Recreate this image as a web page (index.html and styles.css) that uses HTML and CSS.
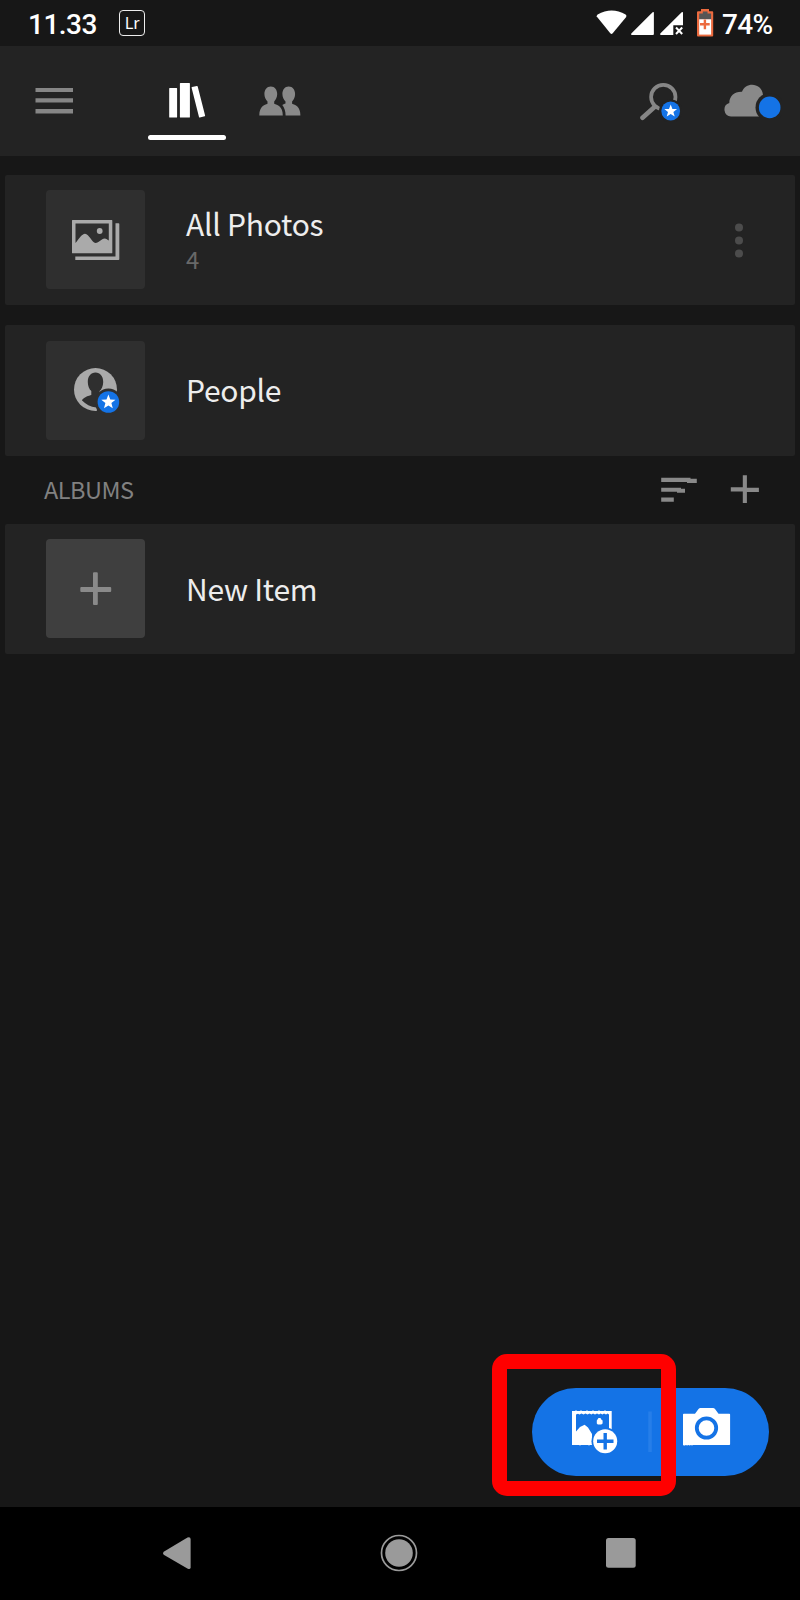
FILE: index.html
```html
<!DOCTYPE html>
<html lang="en">
<head>
<meta charset="utf-8">
<title>Library</title>
<link rel="stylesheet" href="styles.css">
</head>
<body>
<div class="screen">
  <div class="status">
    <span class="time">11.33</span>
    <span class="lr">Lr</span>
    <svg class="status-icons" width="122" height="46" viewBox="594 0 122 46">
      <path fill="#fff" d="M596.7 16.5Q596.6 15.4 597.6 14.6Q611.7 6.4 625.6 14.6Q626.8 15.6 626.2 16.9L612.7 33.3Q611.5 34.6 610.3 33.3Z"/>
      <path fill="#fff" d="M653.9 12.8V34Q653.9 35.1 652.9 35.1H631.9Q630.4 34.8 631.3 33.6L652.6 12.3Q653.8 11.5 653.9 12.8Z"/>
      <path fill="#fff" d="M683 12.8V25.3H673.3V35.1H661Q659.4 34.8 660.3 33.6L681.7 12.3Q682.9 11.5 683 12.8Z"/>
      <path stroke="#fff" stroke-width="2" d="M676 27.5L682.2 34M682.2 27.5L676 34"/>
      <path fill="#ec6b3f" d="M701 9h8v2.2h3.2q1 0 1 1V35.500q0 1-1 1H698q-1 0-1-1V12.200q0-1 1-1h3z"/>
      <path fill="#555" d="M699.200 13.500h3.600v-2h4.700v2h3.600v6h-11.900z"/>
      <path fill="#fff" d="M699.200 19.300h11.900v15.300h-11.900z"/>
      <path stroke="#ec6b3f" stroke-width="2.400" d="M700 24.300h9.700M704.900 19.500v9.700"/>
    </svg>
    <span class="percent">74%</span>
  </div>

  <div class="toolbar">
    <svg class="menu" width="38" height="26" viewBox="35 88 38 26"><path fill="#868686" d="M35.500 88H73v4H35.500zM35.500 98.300H73v4.200H35.500zM35.500 109H73v4.500H35.500z"/></svg>
    <div class="tab">
      <svg width="38" height="35" viewBox="168 83 38 35">
        <path fill="#fff" d="M169.700 88h6.900q.5 0 .5.500v28.500q0 .5-.5.500h-6.900q-.5 0-.5-.5V88.500q0-.5.5-.5zM180.500 83h8.800q.6 0 .6.600v33.300q0 .6-.6.600h-8.800q-.6 0-.6-.6V83.600q0-.6.600-.6zM192 87.100l4.900-1.200q.6-.1.800.500l7.400 29.200q.1.500-.4.700l-4.900 1.200q-.6.100-.8-.5l-7.400-29.200q-.1-.5.400-.7z"/>
      </svg>
      <span class="underline"></span>
    </div>
    <svg class="friends" width="42" height="30" viewBox="259.500 85.500 42 30">
      <g fill="#898989">
        <path d="M271.300 85.900c4 0 6.400 3.300 6.400 7.700 0 3.100-1.400 5.700-3 7.400v2.300c3 1.200 8.600 2.300 8.600 11.700h-23.500c0-9.200 5.300-10.500 8.200-11.700V101c-1.700-1.700-3.100-4.300-3.100-7.400 0-4.400 2.400-7.700 6.400-7.700z"/>
        <path d="M289.200 85.900c4 0 6.400 3.300 6.400 7.700 0 3.100-1.300 5.700-3 7.400v2.300c3 1.200 8.300 2.500 8.300 11.700h-14.800c0-5-1.400-8-3.300-10.600 1.200-.8 2.400-1 3.200-1.400V101c-1.700-1.700-3.100-4.300-3.100-7.400 0-4.400 2.300-7.700 6.300-7.700z"/>
      </g>
    </svg>
    <svg class="search" width="42" height="40" viewBox="640 82 42 40">
      <circle cx="663.300" cy="97" r="12.200" fill="none" stroke="#868686" stroke-width="3.700"/>
      <path d="M654.500 107L642.500 117.800" stroke="#868686" stroke-width="4.600" stroke-linecap="round"/>
      <circle cx="670.700" cy="111" r="11.600" fill="#232323"/>
      <circle cx="670.700" cy="111" r="9.400" fill="#1473e6"/>
      <path fill="#fff" d="M670.700 104.500l1.700 4.400 4.700.2-3.700 2.900 1.300 4.600-4-2.600-4 2.600 1.300-4.600-3.700-2.900 4.700-.2z"/>
    </svg>
    <svg class="cloud" width="58" height="36" viewBox="724 83 58 36">
      <path fill="#898989" d="M731 116.400a6.800 6.800 0 0 1-1.700-13.300C729.300 96 734.500 91.500 742 91.800C745.500 81.500 762 82.500 763 95C768 97 770 102 768 109L762 116.400z"/>
      <circle cx="769.700" cy="107.400" r="14.200" fill="#232323"/>
      <circle cx="769.700" cy="107.400" r="10.800" fill="#1473e6"/>
    </svg>
  </div>

  <main class="library">
    <div class="card">
      <div class="thumb">
        <svg width="49" height="42" viewBox="71 219 49 42">
          <path fill="#aaa" fill-rule="evenodd" d="M72.500 220h39.300q.5 0 .5.500v32.200q0 .5-.5.500H72.500q-.5 0-.5-.5v-32.200q0-.5.5-.5zM75.500 223.500V243C79 239 82 233.800 85 233.800C89 233.800 92 243 95.500 243C99 243 101.500 238.600 104.500 238.600C106.500 238.600 107.500 240 108.800 240.500V223.500z"/>
          <circle cx="99.700" cy="231" r="2.900" fill="#aaa"/>
          <path fill="#aaa" d="M115.500 223.200h3q.8 0 .8.800v35.200q0 .8-.8.800H75.300v-3.600h40.200z"/>
        </svg>
      </div>
      <div class="labels labels-all"><span class="title">All Photos</span><span class="count">4</span></div>
      <svg class="more" width="10" height="36" viewBox="734 222.500 10 36"><g fill="#4c4c4c"><circle cx="739" cy="228" r="4"/><circle cx="739" cy="241" r="4"/><circle cx="739" cy="254" r="4"/></g></svg>
    </div>

    <div class="card people-card">
      <div class="thumb">
        <svg width="49" height="50" viewBox="71 366 49 50">
          <circle cx="95.500" cy="390.500" r="21.500" fill="#aaa"/>
          <path fill="#2f2f2f" d="M95.500 373.600c4.700 0 7.700 3.900 7.700 9.300 0 4-1.500 7-3.600 9.200v4.500l12.400 4-14 12.200h-1c0-2-.3-3.500-.6-4.300-6-.7-10.500-3-14.600-7.300 3-3.800 7-4.500 9.500-5.300v-3.800c-2.100-2.200-3.500-5.200-3.500-9.200 0-5.400 3-9.300 7.700-9.300z"/>
          <circle cx="108.400" cy="403" r="13.500" fill="#2f2f2f"/>
          <circle cx="108.400" cy="403" r="10.800" fill="#1473e6"/>
          <path fill="#fff" d="M108.400 395.500l1.900 5 5.200.3-4.100 3.300 1.400 5.200-4.400-2.900-4.400 2.900 1.400-5.200-4.100-3.300 5.200-.3z"/>
        </svg>
      </div>
      <div class="labels"><span class="title">People</span></div>
    </div>

    <div class="section">
      <span class="section-title">ALBUMS</span>
      <svg class="sort" width="36" height="26" viewBox="661 476.500 36 26"><path fill="#898989" d="M661.200 477.300H690.500V478.200H696.800V482.500H687V481.500H661.200zM661.200 487.300H681V488.200H685V492.300H677V491.300H661.200zM661.200 497H673.800V501.200H661.200z"/></svg>
      <svg class="add" width="30" height="30" viewBox="730 475 30 30"><path fill="#898989" d="M742.800 475.200h4.100v12.600h12v4.200h-12v11h-4.100v-11.500h-12v-4.200h12z"/></svg>
    </div>

    <div class="card">
      <div class="thumb thumb-new">
        <svg width="33" height="35" viewBox="79.500 571 33 35"><path fill="#8a8a8a" d="M94.500 572.300h2.800q1 0 1 1v13.800h12.400q1 0 1 1v2.800q0 1-1 1h-12.400v12.200q0 1-1 1h-2.800q-1 0-1-1v-12.200h-11.700q-1 0-1-1v-2.800q0-1 1-1h11.700v-13.800q0-1 1-1z"/></svg>
      </div>
      <div class="labels"><span class="title">New Item</span></div>
    </div>
  </main>

  <div class="fab">
    <svg width="237" height="88" viewBox="532 1388 237 88">
      <path fill="#fff" fill-rule="evenodd" d="M572 1411h3l1-.8 1 .8h3l1-.8 1 .8h4l1-.8 1 .8h4l1-.8 1 .8h4l1-.8 1 .8h4l1-.8 1 .8h5.700v20H609v-16.500l-1.500-1-1.500 1-2-1-1.500 1-2-1-1.500 1-2-1-2 1-2-1-1.500 1-2-1-2 1-2-1-2 1-2-1-2 1-1.500-.8-2 .8V1431.500L580 1427 584.600 1424.800 588 1427.500 592 1434 592.300 1445H590l-1 .5-1-.5h-7l-1 .5-1-.5h-7z"/>
      <path fill="#fff" d="M597.500 1419.500l1-1.500h2l.8 1.500 1.300 1v3l-1.300 1h-3.500l-1-1v-3z"/>
      <circle cx="605.200" cy="1441.200" r="13.700" fill="#1473e6"/>
      <circle cx="605.200" cy="1441.200" r="12" fill="#fff"/>
      <path stroke="#1473e6" stroke-width="3.400" d="M597 1441.200h16.500M605.200 1433v16.500"/>
      <path fill="#267ee9" d="M648.300 1411.500h3.500v40.500h-3.500z"/>
      <path fill="#fff" d="M683 1414.500q0-.8.800-.8h11.200l3.500-4.600q.8-1 2-1h12.500q1.200 0 2 1l3.500 4.600h10.800q.8 0 .8.800v29.700q0 .8-.8.800H693l-1 .6-1-.6-1.500.6-1-.6-1.500.6-1-.6-1.200.6H683.800l-.8-.6z"/>
      <circle cx="706.500" cy="1428" r="9.700" fill="#fff" stroke="#1473e6" stroke-width="3.800"/>
    </svg>
  </div>
  <div class="highlight"></div>

  <nav class="navbar">
    <svg width="30" height="34" viewBox="162 1536 30 34"><path fill="#9a9a9a" d="M163.700 1551.800L187.500 1537.600Q190.500 1536.700 190.600 1539V1567.500Q190.300 1569.700 187.800 1568.700L163.700 1554.800Q162.200 1553.300 163.700 1551.800z"/></svg>
    <svg width="38" height="38" viewBox="380.500 1534 38 38"><circle cx="399.500" cy="1553" r="17.500" fill="none" stroke="#9a9a9a" stroke-width="1.700"/><circle cx="399.500" cy="1553" r="13.800" fill="#9a9a9a"/></svg>
    <svg width="30" height="30" viewBox="606 1538.300 30 30"><rect x="606" y="1538.400" width="29.700" height="29.700" rx="2.500" fill="#9a9a9a"/></svg>
  </nav>
</div>
</body>
</html>
```
FILE: styles.css
```css
* { box-sizing: border-box; }
body { margin: 0; background: #171717; }
svg { display: block; flex: none; }
.screen {
  position: relative;
  display: flex;
  flex-direction: column;
  width: 800px;
  height: 1600px;
  overflow: hidden;
  background: #171717;
  font-family: "Noto Sans CJK SC", "Noto Sans", sans-serif;
}
.status {
  display: flex;
  align-items: center;
  height: 46px;
  padding-left: 28px;
  color: #fff;
  font: 500 28px/46px Roboto, sans-serif;
}
.time { width: 91px; padding-top: 4px; letter-spacing: -0.500px; }
.lr {
  width: 26px;
  height: 26px;
  border: 1.500px solid #eee;
  border-radius: 4px;
  font: 400 16px/22px "Noto Sans CJK SC", sans-serif;
  letter-spacing: -0.300px;
  text-align: center;
}
.status-icons { margin-left: 449px; }
.percent { margin-left: 6px; padding-top: 4px; letter-spacing: -0.700px; }

.toolbar {
  display: flex;
  align-items: flex-start;
  height: 110px;
  padding-left: 35px;
  background: #232323;
}
.menu { margin-top: 42px; }
.tab {
  display: flex;
  flex-direction: column;
  justify-content: space-between;
  width: 78px;
  height: 94px;
  margin-left: 75px;
  padding-top: 37px;
}
.tab svg { margin-left: 20px; }
.underline { height: 5px; border-radius: 2.500px; background: #fff; }
.friends { margin: 39.500px 0 0 33px; }
.search { margin: 36px 0 0 339px; }
.cloud { margin: 37px 0 0 42px; }

.library { display: flex; flex-direction: column; padding: 19px 5px 0; }
.card {
  display: flex;
  align-items: center;
  height: 130px;
  padding: 0 0 1px 41px;
  border-radius: 2px;
  background: #232323;
}
.people-card { height: 131px; margin-top: 20px; }
.thumb {
  display: flex;
  align-items: center;
  justify-content: center;
  width: 99px;
  height: 99px;
  border-radius: 4px;
  background: #2f2f2f;
}
.thumb-new { background: #3f3f3f; }
.labels { display: flex; flex-direction: column; margin-left: 41px; padding-bottom: 2px; }
.labels-all { padding-bottom: 0; }
.title {
  color: #ededed;
  font-size: 30px;
  line-height: 38px;
  letter-spacing: -0.250px;
  white-space: nowrap;
}
.count { color: #686868; font-size: 24px; line-height: 34px; }
.more { margin-left: auto; margin-right: 51px; }

.section { display: flex; align-items: center; height: 68px; padding-left: 39px; }
.section-title {
  width: 617px;
  padding-bottom: 2px;
  color: #818181;
  font-size: 23.500px;
  line-height: 34px;
  letter-spacing: -0.500px;
}
.add { margin-left: 33px; }

.fab {
  position: absolute;
  left: 532px;
  top: 1388px;
  width: 237px;
  height: 88px;
  border-radius: 44px;
  background: #1473e6;
}
.highlight {
  position: absolute;
  left: 492px;
  top: 1354px;
  width: 184px;
  height: 142px;
  border: 15px solid #f00;
  border-radius: 15px;
}
.navbar {
  display: flex;
  align-items: center;
  height: 93px;
  margin-top: auto;
  padding: 0 164px 1px 162px;
  justify-content: space-between;
  background: #000;
}
```
